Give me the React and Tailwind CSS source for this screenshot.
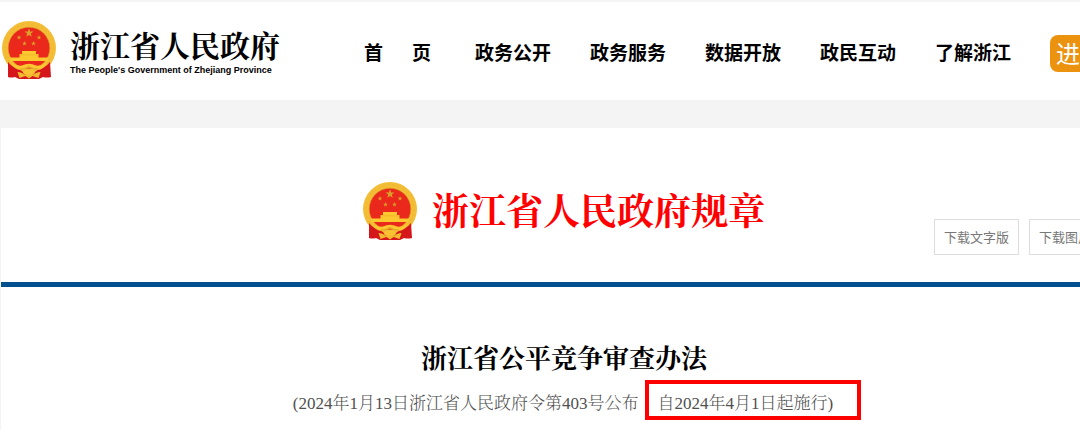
import React from 'react'

const navItems = ["政务公开", "政务服务", "数据开放", "政民互动", "了解浙江"]

const STAR = "M0 -5 L1.2 -1.6 L4.8 -1.5 L1.9 0.6 L2.9 4 L0 2 L-2.9 4 L-1.9 0.6 L-4.8 -1.5 L-1.2 -1.6 Z"

function Emblem() {
  return (
    <svg width="55" height="58" viewBox="0 0 55 58" fill="none" className="shrink-0" aria-hidden="true">
      {/* wheat ring */}
      <circle cx="27" cy="27" r="27" fill="#f3bd35" />
      <circle cx="27" cy="27" r="24" stroke="#edb334" strokeWidth="1" strokeDasharray="2 3" />
      <circle cx="27" cy="27" r="20.8" fill="#ea281c" stroke="#d79a26" strokeWidth="0.6" />
      {/* ribbon */}
      <path d="M6 41 Q11 47 17 48 L21 51 H33 L37 48 Q43 47 48 41 L49 56 Q45 57 41 56 L37 58 H17 L13 56 Q9 57 6 56 Z" fill="#d5161b" />
      {/* stars */}
      <g fill="#dca02a">
        <path d={STAR} transform="translate(27 12) scale(0.95)" />
        <path d={STAR} transform="translate(17 16.5) scale(0.5)" />
        <path d={STAR} transform="translate(37 16.5) scale(0.5)" />
        <path d={STAR} transform="translate(22.5 22.5) scale(0.5)" />
        <path d={STAR} transform="translate(31.5 22.5) scale(0.5)" />
      </g>
      {/* gate */}
      <path d="M20 30 H34 V33 H36.5 V36.5 H46 V40 H8 V36.5 H17.5 V33 H20 Z" fill="#fbc82f" />
      <path d="M18 33.8 H36" stroke="#e9a526" strokeWidth="0.5" />
      {/* drapes and gear */}
      <path d="M8 40 Q13 45.5 20 44.5 Q27 41 34 44.5 Q41 45.5 46 40 Q42 49 35 49 L27 46.5 L19 49 Q12 49 8 40 Z" fill="#fbc62f" />
      <path d="M18 48 Q22 49 27 45.5 Q32 49 36 48" stroke="#d79a26" strokeWidth="0.8" />
      <ellipse cx="27" cy="51.5" rx="6" ry="3" fill="#f8c232" />
      <path d="M15.5 51 Q20 51 22 53.5 H32 Q34 51 38.5 51 L36.5 57 L30.5 55 L27 57.5 L23.5 55 L17.5 57 Z" fill="#f3ba30" />
    </svg>
  )
}

function Header() {
  return (
    <header className="flex h-[100px] min-w-[1126px] items-center border-t-2 border-[#f4f4f4] bg-white pl-[2px]">
      <a href="#" className="flex w-[362px] items-center gap-[13px] pb-[2px]">
        <Emblem />
        <span className="flex flex-col text-black">
          <span className="font-['Noto_Serif_CJK_SC','Noto_Sans_CJK_SC',serif] text-[30px] leading-[40px] font-bold whitespace-nowrap">浙江省人民政府</span>
          <span className="font-['Liberation_Sans',sans-serif] text-[9px] leading-[12px] font-bold whitespace-nowrap">The People's Government of Zhejiang Province</span>
        </span>
      </a>

      <nav className="flex gap-[39px] pt-[2px] text-[19px] leading-[28px] font-bold whitespace-nowrap text-black">
        <a href="#" className="flex w-[72px] gap-[29px]">
          <span>首</span>
          <span>页</span>
        </a>
        {navItems.map((item) => (
          <a href="#" key={item}>{item}</a>
        ))}
      </nav>

      <button type="button" className="mt-1 ml-[39px] h-[37px] flex-1 rounded-lg bg-[#eb930f] pl-[6px] text-left text-2xl text-white">进</button>
    </header>
  )
}

function DownloadButton({ children }) {
  return (
    <button type="button" className="h-9 border border-[#dddddd] px-[9px] text-[13px] whitespace-nowrap text-[#777777]">
      {children}
    </button>
  )
}

function App() {
  return (
    <div className="min-h-screen overflow-hidden bg-[#f4f4f4] font-['Noto_Sans_CJK_SC',sans-serif]">
      <Header />

      <main className="mt-7 ml-px min-w-[1126px] bg-white">
        <div className="grid grid-cols-[1fr_auto_1fr] border-b-5 border-[#03508f] pt-[54px] pb-[27px]">
          <div className="col-start-2 flex h-[58px] items-center gap-[14px]">
            <Emblem />
            <h2 className="pb-1 font-['Noto_Serif_CJK_SC','Noto_Sans_CJK_SC',serif] text-[37px] leading-[48px] font-bold whitespace-nowrap text-[#ff0000]">浙江省人民政府规章</h2>
          </div>
          <div className="mt-[37px] flex justify-end gap-[10px] pr-[13px]">
            <DownloadButton>下载文字版</DownloadButton>
            <DownloadButton>下载图片版</DownloadButton>
          </div>
        </div>

        <article className="pt-[53px] pb-[10px] text-center font-['Liberation_Serif','Noto_Serif_CJK_SC','Noto_Sans_CJK_SC',serif]">
          <h1 className="text-[26px] leading-[40px] font-bold text-black">浙江省公平竞争审查办法</h1>
          <p className="flex justify-center pl-[26px] text-[17px] leading-6 font-light whitespace-nowrap text-[#505050]">
            <span className="pt-3">(2024年1月13日浙江省人民政府令第403号公布</span>
            <span className="ml-[6px] border-4 border-[#ff0000] pt-2 pr-[24px] pl-[9px]">自2024年4月1日起施行)</span>
          </p>
        </article>
      </main>
    </div>
  )
}

export default App
